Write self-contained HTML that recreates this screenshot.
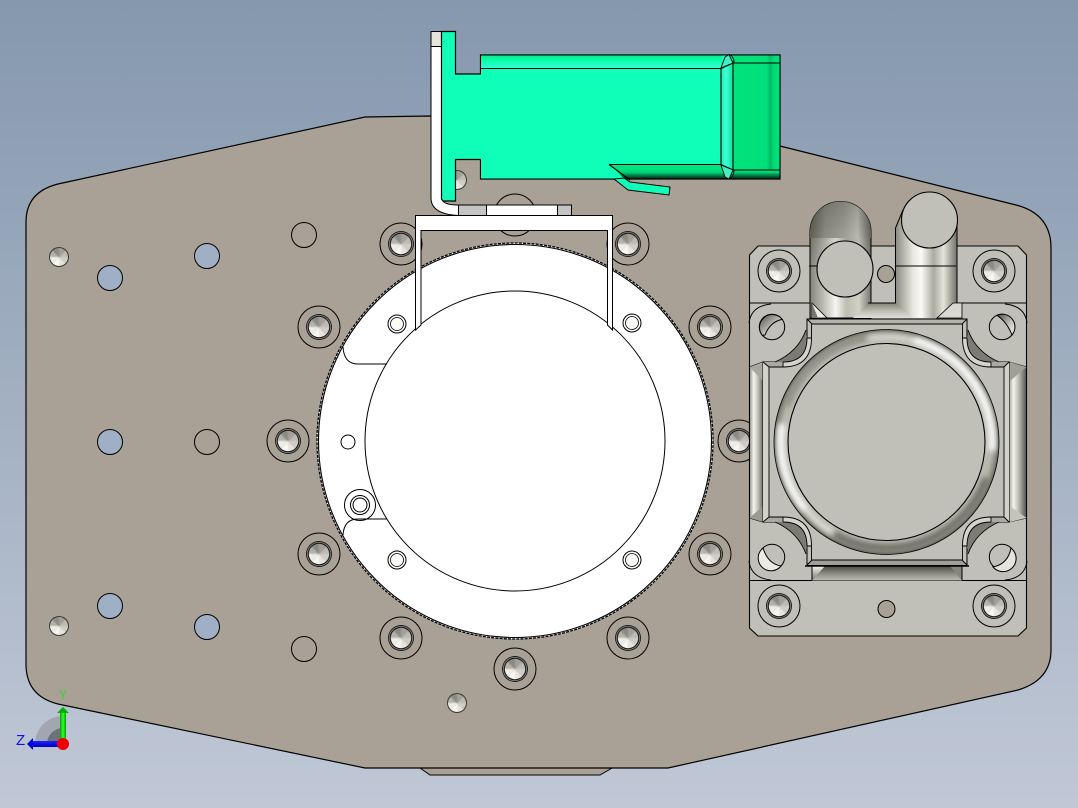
<!DOCTYPE html>
<html><head><meta charset="utf-8"><title>CAD</title>
<style>html,body{margin:0;padding:0;background:#a0aaba}svg{display:block}text{font-family:"Liberation Sans",sans-serif}</style></head>
<body>
<svg xmlns="http://www.w3.org/2000/svg" width="1078" height="808" viewBox="0 0 1078 808">
<defs>
<linearGradient id="bg" x1="0" y1="0" x2="0" y2="1"><stop offset="0" stop-color="#8598ae"/><stop offset="1" stop-color="#c0c8d6"/></linearGradient>
<filter id="bl" x="-20%" y="-20%" width="140%" height="140%"><feGaussianBlur stdDeviation=".7"/></filter>
<filter id="bl3" x="-30%" y="-30%" width="160%" height="160%"><feGaussianBlur stdDeviation="3"/></filter>
<clipPath id="c10"><circle r="10.2"/></clipPath>
<clipPath id="ringClip"><circle cx="886.5" cy="442" r="112.5"/></clipPath>
<g id="cone"><g clip-path="url(#c10)"><g filter="url(#bl)">
<path d="M0 0 L12 0 L9 9 Z" fill="#cfcdc5"/><path d="M0 0 L9 9 L0 12 Z" fill="#e6e4dc"/><path d="M0 0 L0 12 L-9 9 Z" fill="#f8f6f0"/><path d="M0 0 L-9 9 L-12 0 Z" fill="#efede6"/>
<path d="M0 0 L-12 0 L-9 -9 Z" fill="#b4b2aa"/><path d="M0 0 L-9 -9 L0 -12 Z" fill="#8c8a84"/><path d="M0 0 L0 -12 L9 -9 Z" fill="#a2a098"/><path d="M0 0 L9 -9 L12 0 Z" fill="#bdbbb3"/>
</g></g></g>
<linearGradient id="tubeL" x1="0" y1="0" x2="1" y2="0"><stop offset="0" stop-color="#84847a"/><stop offset=".25" stop-color="#c4c4ba"/><stop offset=".42" stop-color="#f6f6f0"/><stop offset=".6" stop-color="#bcbcb2"/><stop offset=".8" stop-color="#d2d2c8"/><stop offset="1" stop-color="#76766e"/></linearGradient>
<linearGradient id="tubeR" x1="0" y1="0" x2="1" y2="0"><stop offset="0" stop-color="#8a8a80"/><stop offset=".28" stop-color="#e6e6de"/><stop offset=".42" stop-color="#fbfbf6"/><stop offset=".62" stop-color="#aaaaa0"/><stop offset=".78" stop-color="#e4e4da"/><stop offset="1" stop-color="#70706a"/></linearGradient>
<linearGradient id="dome" x1="0" y1="0" x2="1" y2="0"><stop offset="0" stop-color="#6e6e66"/><stop offset=".25" stop-color="#a4a49a"/><stop offset=".55" stop-color="#b8b8ae"/><stop offset=".78" stop-color="#d8d8ce"/><stop offset="1" stop-color="#74746c"/></linearGradient>
<linearGradient id="domeV" x1="0" y1="0" x2="0" y2="1"><stop offset="0" stop-color="#000" stop-opacity=".3"/><stop offset="1" stop-color="#000" stop-opacity="0"/></linearGradient>
<linearGradient id="fin" x1="0" y1="0" x2="1" y2="0"><stop offset="0" stop-color="#8c8c84"/><stop offset=".3" stop-color="#f4f4ee"/><stop offset=".6" stop-color="#c8c8be"/><stop offset="1" stop-color="#6a6a62"/></linearGradient>
<linearGradient id="finR" x1="0" y1="0" x2="1" y2="0"><stop offset="0" stop-color="#a0a096"/><stop offset=".25" stop-color="#f4f4ee"/><stop offset=".55" stop-color="#bcbcb2"/><stop offset="1" stop-color="#55554f"/></linearGradient>
<linearGradient id="finB" x1="0" y1="0" x2="0" y2="1"><stop offset="0" stop-color="#4a4a42"/><stop offset=".55" stop-color="#8e8e84"/><stop offset="1" stop-color="#bcbcb2"/></linearGradient>
<linearGradient id="triB" x1="0" y1="0" x2="0" y2="1"><stop offset="0" stop-color="#f4f4ee"/><stop offset="1" stop-color="#77776e"/></linearGradient>
<linearGradient id="base" x1="0" y1="0" x2="0" y2="1"><stop offset="0" stop-color="#85857c"/><stop offset=".6" stop-color="#c4c4ba"/><stop offset="1" stop-color="#e0e0d8"/></linearGradient>
<linearGradient id="earG" x1="0" y1="0" x2="1" y2="1"><stop offset="0" stop-color="#4c4c46"/><stop offset=".6" stop-color="#c8c8be"/><stop offset="1" stop-color="#f6f6f0"/></linearGradient>
<radialGradient id="ringR" gradientUnits="userSpaceOnUse" cx="886.5" cy="442" r="113"><stop offset=".87" stop-color="#bcbcb4"/><stop offset=".93" stop-color="#b4b4aa"/><stop offset=".97" stop-color="#8e8e84"/><stop offset="1" stop-color="#5a5a52"/></radialGradient>
<linearGradient id="band" x1="0" y1="0" x2="0" y2="1"><stop offset="0" stop-color="#00f088"/><stop offset=".45" stop-color="#10ffb0"/><stop offset="1" stop-color="#30ffd4"/></linearGradient>
<linearGradient id="bandB" x1="0" y1="0" x2="0" y2="1"><stop offset="0" stop-color="#00e884"/><stop offset=".55" stop-color="#00d878"/><stop offset="1" stop-color="#002a18"/></linearGradient>
<linearGradient id="endG" x1="0" y1="0" x2="1" y2="0"><stop offset="0" stop-color="#00e27a"/><stop offset=".72" stop-color="#00e07a"/><stop offset=".8" stop-color="#00bc68"/><stop offset=".88" stop-color="#00dc76"/><stop offset="1" stop-color="#00e27a"/></linearGradient>
<linearGradient id="midG" x1="0" y1="0" x2="1" y2="0"><stop offset="0" stop-color="#10f0a8"/><stop offset=".4" stop-color="#40ffd8"/><stop offset="1" stop-color="#10e098"/></linearGradient>
<linearGradient id="yG" x1="0" y1="0" x2="1" y2="0"><stop offset="0" stop-color="#00a000"/><stop offset=".5" stop-color="#30ff30"/><stop offset="1" stop-color="#00a000"/></linearGradient>
<linearGradient id="zG" x1="0" y1="0" x2="0" y2="1"><stop offset="0" stop-color="#2020ff"/><stop offset="1" stop-color="#0000c0"/></linearGradient>
<g id="b"><circle r="21" fill="none" stroke="#000" stroke-width="1"/><circle r="13" fill="#1c1c1c"/><circle r="11.7" fill="none" stroke="#9a9890" stroke-width=".7"/><use href="#cone"/></g>
<g id="p"><circle r="10" fill="#3a3a38"/><g transform="scale(.88)"><use href="#cone"/></g></g>
<g id="s"><circle r="9" fill="#fff" stroke="#000" stroke-width="1"/><circle r="6.5" fill="#fbfbf6" stroke="#000" stroke-width=".8"/></g>
<g id="fil"><path d="M806 330 Q798 352 775 362 L783 362 Q807 362 807 338 Z" fill="#7c7c72"/><path d="M807 338 Q807 362 783 362 L783 367 Q811.500 367 811.500 338 Z" fill="#d4d4cc"/><path d="M806 330 Q798 352 775 362 M807 338 Q807 362 783 362 M811.500 338 Q811.500 367 783 367 M807 338 H811.500 M783 362 V367" fill="none" stroke="#000" stroke-width=".9"/></g>
</defs>
<rect width="1078" height="808" fill="url(#bg)"/>

<!-- base plate -->
<path d="M420 768 L430 775 L600 775 L612 768 Z" fill="#a9a196" stroke="#000"/>
<path d="M365 117 L430 116 L780 146 L1016 205 Q1051 214 1051 248 L1051 650 Q1051 680 1018 690 L668 768 L365 768 L58 704 Q26 696 26 664 L26 222 Q26 192 58 184 Z" fill="#a9a196" stroke="#000" stroke-width="1.2"/>

<!-- holes -->
<g fill="#9fb0c6" stroke="#000"><circle cx="110" cy="278" r="12.5"/><circle cx="207" cy="256" r="12.5"/><circle cx="110" cy="442" r="12.5"/><circle cx="110" cy="606" r="12.5"/><circle cx="207" cy="627" r="12.5"/></g>
<g fill="none" stroke="#000"><circle cx="304" cy="235" r="12.5"/><circle cx="207" cy="442" r="12.5"/><circle cx="304" cy="649" r="12.5"/><circle cx="515" cy="215" r="21"/></g>
<use href="#p" x="59" y="257"/><use href="#p" x="59" y="626"/><use href="#p" x="457" y="703"/><use href="#p" x="457" y="180"/>
<use href="#b" x="401" y="244"/><use href="#b" x="628" y="244"/><use href="#b" x="319" y="327"/><use href="#b" x="710" y="327"/><use href="#b" x="288" y="441"/><use href="#b" x="739" y="441"/><use href="#b" x="319" y="554"/><use href="#b" x="710" y="554"/><use href="#b" x="401" y="638"/><use href="#b" x="628" y="638"/><use href="#b" x="515" y="669"/>

<!-- central disk -->
<circle cx="515" cy="441" r="198" fill="#fff" stroke="#000" stroke-width="1.3" stroke-dasharray="3 1.2"/>
<circle cx="515" cy="441" r="196.500" fill="#fff" stroke="#000" stroke-width="1.1"/>
<circle cx="515" cy="441" r="150" fill="#fff" stroke="#000" stroke-width="1"/>
<path d="M343 347 Q344 364 358 364 L387 364" fill="none" stroke="#000"/>
<path d="M343 535 Q344 519 358 519 L387 519" fill="none" stroke="#000"/>
<use href="#s" x="397" y="324"/><use href="#s" x="632" y="323"/><use href="#s" x="397" y="560"/><use href="#s" x="632" y="560"/>
<circle cx="348" cy="442" r="7" fill="#fff" stroke="#000"/>
<circle cx="360" cy="505" r="15.5" fill="none" stroke="#000"/><circle cx="360" cy="505" r="9.5" fill="#fff" stroke="#000"/><circle cx="360" cy="505" r="7" fill="#fff" stroke="#000"/>

<!-- white bracket -->
<path d="M415.500 215.500 H612.500 V330 L607.500 325 V230.500 H421 V325 L415.500 330 Z" fill="#fff" stroke="#000" stroke-width="1"/>
<path d="M431 46 V198 Q431 214 458 215.500 H571 V205 H458 Q442 205 442 198 V46 Z" fill="#fff" stroke="#000"/>
<rect x="431" y="31.500" width="11" height="15" fill="#e4e3dc" stroke="#000"/>
<rect x="458.500" y="205" width="28" height="10.500" fill="#c4c4c4" stroke="#000"/><rect x="557.500" y="205" width="14" height="10.500" fill="#c4c4c4" stroke="#000"/>

<!-- green connector -->
<path d="M441.500 31.500 H455.500 V74 H480.500 V55 H780 V179 H480.500 V159.500 H455.500 V201 H443 L441.500 199 Z" fill="#10ffb8" stroke="#000" stroke-width="1.2"/>
<rect x="481" y="55.500" width="240" height="12.500" fill="url(#band)"/>
<rect x="721" y="55.500" width="12" height="123" fill="url(#midG)"/>
<rect x="733" y="55.500" width="46.500" height="123" fill="url(#endG)"/>
<path d="M609 164.500 H721 L733 170 H779.500 V178.500 H624 Z" fill="url(#bandB)"/>
<path d="M481 68 H721 V164.500 H609 L624 178.500 H481 Z" fill="#10ffb8"/>
<path d="M481 68.500 H721 L733 63 H780 M721 68.500 V164.500 M733 63 V170 M609 164.500 H721 L733 170 H780 M609 164.500 L630 180" fill="none" stroke="#000" stroke-width="1.1"/>
<path d="M721 68 L725 57 L729 54.500 L733 63 Z M721 165 L725 177 L729 179 L733 170 Z" fill="#40f0c0" stroke="#000" stroke-width=".9"/>
<path d="M729 54.500 Q734 56 734 63 M729 179 Q734 177 734 170" fill="none" stroke="#000" stroke-width=".9"/>
<path d="M614 179 L628 190 L669 195 L670 187 L630 182 L624 178 Z" fill="#10ffb8" stroke="#000" stroke-width="1"/>

<!-- motor block -->
<path d="M758 246 H1018 L1026.500 255 V628 L1018 636 H758 L749.500 628 V255 Z" fill="#c0c0b8" stroke="#000" stroke-width="1.1"/>
<path d="M749.500 580.500 H1026.500 M749 303 H1027" stroke="#000" fill="none"/>
<path d="M749 323 Q751 306 771 304 M1027 323 Q1025 306 1005 304 M749 561 Q751 578 771 580 M1027 561 Q1025 578 1005 580" fill="none" stroke="#000"/>
<use href="#b" x="779" y="271"/><use href="#b" x="994" y="271"/><use href="#b" x="779" y="606"/><use href="#b" x="994" y="606"/>
<circle cx="886" cy="274" r="8.500" fill="#a9a196" stroke="#000"/><circle cx="886.500" cy="609" r="8.500" fill="#a9a196" stroke="#000"/>
<!-- ear holes -->
<g stroke="#000">
<circle cx="772" cy="327" r="12.700" fill="#c0c0b8"/><path d="M762.300 335.300 A12.700 12.700 0 0 1 782.300 319.300 Q770 322 765 335 Z" fill="url(#earG)"/>
<circle cx="1002" cy="327" r="12.700" fill="#c0c0b8"/><path d="M997 315.300 A12.700 12.700 0 0 1 1012 335 Q1007 322 997 315.300 Z" fill="url(#earG)"/>
<circle cx="772" cy="557" r="12.700" fill="#c0c0b8"/><path d="M761 550 A12.700 12.700 0 0 0 781 566 Q768 564 763 548 Z" fill="#ecece4"/>
<circle cx="1002" cy="557" r="12.700" fill="#c0c0b8"/><path d="M1013 550 A12.700 12.700 0 0 1 993 567 Q1008 564 1011 548 Z" fill="#e4e4dc"/>
</g>

<!-- tubes -->
<path d="M810 318 V232 A30.500 30.500 0 0 1 871 232 V318 Z" fill="url(#tubeL)" stroke="#000"/>
<path d="M810 238 V232 A30.500 30.500 0 0 1 871 232 V238 Z" fill="url(#dome)"/>
<path d="M810 270 V232 A30.500 30.500 0 0 1 871 232 V270 Z" fill="url(#domeV)"/>
<path d="M809 266 H818" stroke="#000"/>
<path d="M895.500 318 V228 L905 205 L929 200 L957 220 V318 Z" fill="url(#tubeR)"/>
<path d="M895.500 318 V228 L903 210 M957 225 V318" fill="none" stroke="#000"/>
<path d="M895.500 266 H956" stroke="#000"/>
<circle cx="845" cy="269" r="28" fill="#c0c0b8" stroke="#000" stroke-width="1.1"/>
<circle cx="929.500" cy="220" r="28" fill="#c0c0b8" stroke="#000" stroke-width="1.1"/>
<path d="M871 303 H896 L913 318 H853 Z" fill="url(#base)"/>
<path d="M868 303 H896" stroke="#000"/>
<path d="M812 303 L827 318 H812 Z" fill="#eeeee8" stroke="#000" stroke-width=".8"/><path d="M812 303 L818 318 H812 Z" fill="#77776e"/>
<path d="M962 303 H953 L937 318 H962 Z" fill="#d8d8d0" stroke="#000" stroke-width=".8"/>

<!-- bottom fin -->
<path d="M812 566 H962 V580.500 H812 Z" fill="url(#finB)"/>
<path d="M812 566 H825 L812 580.500 Z" fill="url(#triB)"/><path d="M962 566 H950 L962 580.500 Z" fill="#86867c"/>
<path d="M812 580 V566 M962 580 V566" stroke="#000"/>
<!-- side fins -->
<path d="M749.500 367 L763 362 V522 L749.500 518 Z" fill="url(#fin)" stroke="#000"/>
<path d="M1026.500 367 L1009 362 V522 L1026.500 518 Z" fill="url(#finR)" stroke="#000"/>
<path d="M749.500 367 L763 381 V362 Z" fill="#a8a89e"/><path d="M1026.500 367 L1010 381 V362 Z" fill="#a0a096"/>
<path d="M749.500 518 L763 506 V522 Z" fill="#9a9a90"/><path d="M1026.500 518 L1010 506 V522 Z" fill="#c4c4ba"/>

<!-- cross body -->
<path d="M807 319 H967 V338 Q967 362 991 362 H1009 V522 H991 Q967 522 967 546 V565 H807 V546 Q807 522 783 522 H763 V362 H783 Q807 362 807 338 Z" fill="#c0c0b8" stroke="#000" stroke-width="1"/>
<path d="M807 319 H967 L962 324 H812 Z" fill="#b4b4aa"/><path d="M807 565 H967 L962 560 H812 Z" fill="#a0a096"/>
<path d="M763 362 L769 367 V517 L763 522 Z" fill="#d2d2ca"/><path d="M1009 362 L1004 367 V517 L1009 522 Z" fill="#d2d2ca"/>
<path d="M763 362 H783 V367 H769 Z M1009 362 H991 V367 H1004 Z M763 522 H783 V517 H769 Z M1009 522 H991 V517 H1004 Z" fill="#aaaaa0"/>
<path d="M812 324 H962 M769 367 V517 M1004 367 V517 M812 560 H962 M807 319 L812 324 M967 319 L962 324 M763 362 L769 367 M1009 362 L1004 367 M763 522 L769 517 M1009 522 L1004 517 M807 565 L812 560 M967 565 L962 560 M811.500 324 V338 M962.500 324 V338 M811.500 560 V546 M962.500 560 V546 M769 367 H783 M1004 367 H991 M769 517 H783 M1004 517 H991" stroke="#000" stroke-width=".9" fill="none"/>
<path d="M807 319 H967 V324 M807 319 V338" stroke="#000" fill="none"/>
<path d="M805 566 H969" stroke="#000" stroke-width="1.6"/>
<use href="#fil"/>
<g transform="translate(1774 0) scale(-1 1)"><use href="#fil"/></g>
<g transform="translate(0 884) scale(1 -1)"><use href="#fil"/></g>
<g transform="translate(1774 884) scale(-1 -1)"><use href="#fil"/></g>

<!-- ring -->
<circle cx="886.500" cy="442" r="112.500" fill="url(#ringR)"/>
<g clip-path="url(#ringClip)" fill="none">
<g filter="url(#bl3)">
<path d="M782 424 A105.500 105.500 0 0 0 805.500 510" stroke="#ffffff" stroke-width="7"/>
<path d="M914 340 A105.500 105.500 0 0 1 992 451" stroke="#ffffff" stroke-width="7"/>
<path d="M806 510 A105.500 105.500 0 0 0 836 535" stroke="#f0f0e8" stroke-width="4"/>
<path d="M940 533 A105.500 105.500 0 0 1 833 533" stroke="#66665e" stroke-width="6"/>
<path d="M986 478 A105.500 105.500 0 0 1 940 533" stroke="#66665e" stroke-width="6"/>
<path d="M787 406 A105.500 105.500 0 0 1 868 338" stroke="#88887e" stroke-width="5"/>
<path d="M868 338 A105.500 105.500 0 0 1 914 340" stroke="#e4e4dc" stroke-width="4"/>
</g></g>
<circle cx="886.500" cy="442" r="112.500" fill="none" stroke="#000" stroke-width=".8"/>
<circle cx="886.500" cy="442" r="98.500" fill="#c0c0b8" stroke="#000" stroke-width="1.1"/>

<!-- triad -->
<path d="M35 744 A28 28 0 0 1 63 716 V744 Z" fill="#a2a6b0"/>
<path d="M47 744 A16 16 0 0 1 63 728 V744 Z" fill="#6e7178"/>
<rect x="60" y="713" width="6" height="31" fill="url(#yG)"/><path d="M63 707 L57 713 H69 Z" fill="#00b000"/>
<rect x="33" y="741" width="30" height="6" fill="url(#zG)"/><path d="M27 744 L33 738 V750 Z" fill="#0000d8"/>
<circle cx="63" cy="744" r="6" fill="#f00000"/>
<text x="59" y="699" font-size="12" fill="#22e022">Y</text>
<text x="16" y="745" font-size="15" fill="#1010e0">Z</text>
</svg>
</body></html>
